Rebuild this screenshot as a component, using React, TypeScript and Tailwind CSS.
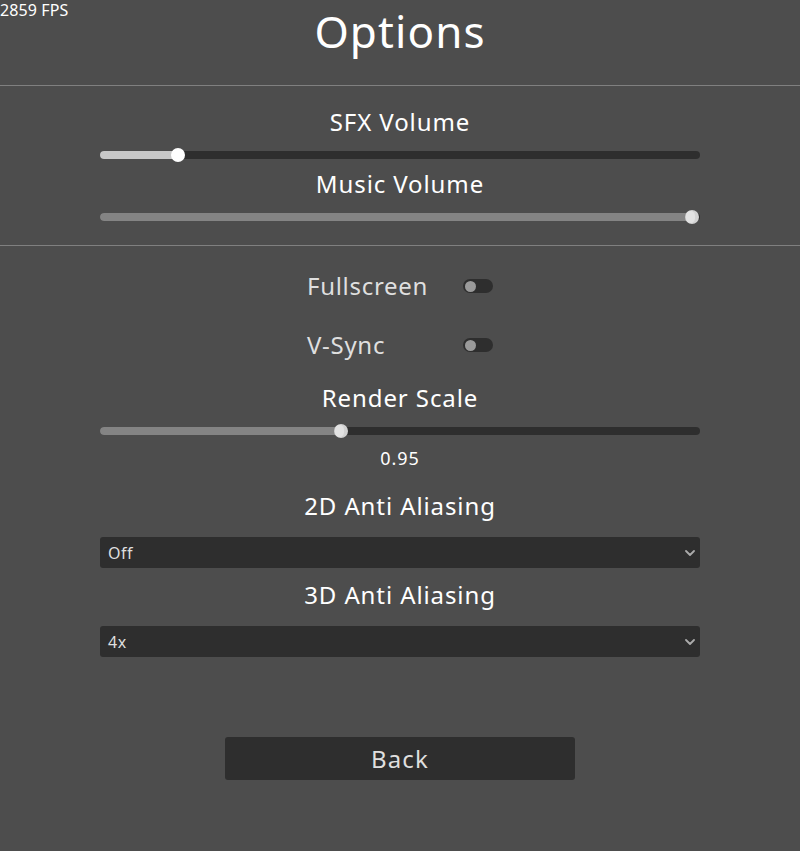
import React from 'react';

interface SliderProps {
  pos: number; // thumb centre, px from the track's left edge
  active?: boolean;
}

function Slider({ pos, active = false }: SliderProps) {
  return (
    <div className="relative mx-auto flex h-[14px] w-[600px] items-center">
      <div className="h-2 w-full rounded bg-[#2e2e2e]" />
      <div
        className={`absolute left-0 h-2 rounded-l ${active ? 'bg-[#c8c8c8]' : 'bg-[#848484]'}`}
        style={{ width: pos }}
      />
      {active ? (
        <div className="absolute top-0 h-[14px] w-[14px] rounded-full bg-white" style={{ left: pos - 7 }} />
      ) : (
        <div
          className="absolute top-0 h-[14px] w-[14px] overflow-hidden rounded-full bg-[#d2d2d2]"
          style={{ left: pos - 7 }}
        >
          <div className="absolute left-[1px] top-[1px] h-[12px] w-[9px] rounded-full bg-[#e2e2e2]" />
        </div>
      )}
    </div>
  );
}

function Toggle({ label, className = '' }: { label: string; className?: string }) {
  return (
    <div className={`mx-auto flex h-[24px] w-[186px] items-center justify-between ${className}`}>
      <span className="text-[24px] leading-[24px] tracking-[0.7px] text-[#dfdfdf]">{label}</span>
      <div className="flex h-[14px] w-[30px] items-center rounded-full bg-[#2e2e2e]">
        <div className="ml-[1.5px] h-[11px] w-[11px] rounded-full bg-[#9a9a9a]" />
      </div>
    </div>
  );
}

function Select({ value, className = '' }: { value: string; className?: string }) {
  return (
    <div
      className={`mx-auto flex h-[31px] w-[600px] items-center justify-between rounded-[3px] bg-[#2e2e2e] pl-2 pr-[5px] ${className}`}
    >
      <span className="text-[16px] leading-[16px] tracking-[0.5px] text-[#dfdfdf]">{value}</span>
      <svg width="10" height="6" viewBox="0 0 10 6" fill="none">
        <path d="M1 1l4 4 4-4" stroke="#ababab" strokeWidth="1.8" strokeLinecap="round" strokeLinejoin="round" />
      </svg>
    </div>
  );
}

function Heading({ children, className = '' }: { children: React.ReactNode; className?: string }) {
  return (
    <h2 className={`text-center text-[24px] leading-[24px] tracking-[0.9px] text-white ${className}`}>{children}</h2>
  );
}

export default function App() {
  return (
    <div className="relative min-h-[851px] w-full bg-[#4d4d4d] font-['Noto_Sans',sans-serif]">
      {/* fps counter overlay */}
      <div className="absolute left-0 top-[2px] text-[16px] leading-[16px] tracking-[0.1px] text-white">2859 FPS</div>

      <div className="flex flex-col">
        <h1 className="h-[85px] pt-[9px] text-center text-[44px] leading-[44px] tracking-[1.1px] text-white">
          Options
        </h1>
        <div className="h-px bg-[#808080]" />

        {/* audio */}
        <Heading className="mt-[24px]">SFX Volume</Heading>
        <div className="mt-[14px]">
          <Slider pos={78} active />
        </div>
        <Heading className="mt-[10px]">Music Volume</Heading>
        <div className="mt-[14px]">
          <Slider pos={592} />
        </div>

        <div className="mt-[21px] h-px bg-[#808080]" />

        {/* video */}
        <Toggle label="Fullscreen" className="mt-[28px]" />
        <Toggle label="V-Sync" className="mt-[35px]" />

        <Heading className="mt-[29px]">Render Scale</Heading>
        <div className="mt-[14px]">
          <Slider pos={241} />
        </div>
        <div className="mt-[11px] text-center text-[18px] leading-[18px] tracking-[1px] text-white">0.95</div>

        <Heading className="mt-[27px]">2D Anti Aliasing</Heading>
        <Select value="Off" className="mt-[19px]" />
        <Heading className="mt-[15px]">3D Anti Aliasing</Heading>
        <Select value="4x" className="mt-[19px]" />

        <button className="mx-auto mt-[80px] flex h-[43px] w-[350px] items-center justify-center rounded-[3px] bg-[#2e2e2e] text-[24px] leading-[24px] tracking-[1.2px] text-[#dfdfdf]">
          Back
        </button>
      </div>
    </div>
  );
}
